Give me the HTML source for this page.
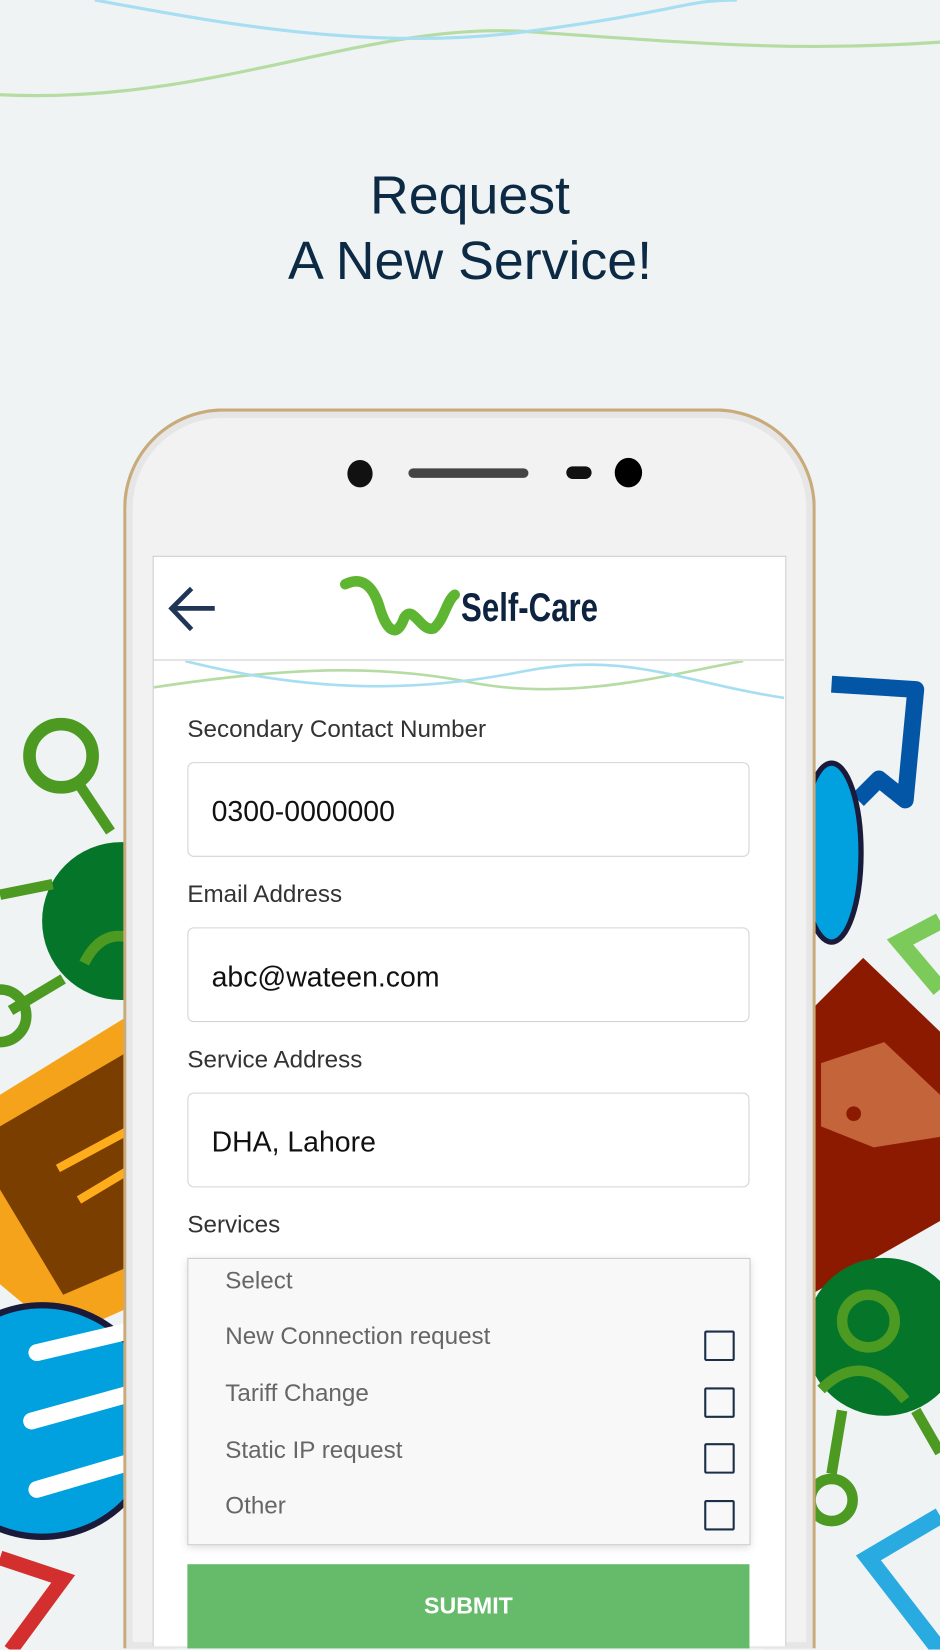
<!DOCTYPE html>
<html><head><meta charset="utf-8"><style>
html,body{margin:0;padding:0;width:940px;height:1650px;overflow:hidden;background:#eff3f4;}
#clip{position:absolute;left:0;top:0;width:940px;height:1650px;overflow:hidden;}
#w{position:absolute;left:0;top:0;width:893px;height:1567px;overflow:hidden;transform:scale(1.05263);transform-origin:0 0;font-family:"Liberation Sans",sans-serif;}
.a{position:absolute;}
.lbl{position:absolute;left:178px;font-size:23px;color:#333;}
.fld{position:absolute;left:178px;width:532px;height:88px;border:1.5px solid #d4d4d4;border-radius:6px;background:#fff;}
.fld span{position:absolute;left:22px;top:31px;font-size:27px;color:#111;}
.it{position:absolute;left:35px;font-size:23px;color:#666;}
.cb{position:absolute;left:490px;width:25px;height:25px;border:2.5px solid #1b2f48;border-radius:2px;}
</style></head><body><div id="clip"><div id="w">
<svg class="a" style="left:0;top:0" width="893" height="1568">
<path d="M0 90 C200 100 350 20 500 30 S750 50 893 40" stroke="#b5dca3" stroke-width="3" fill="none"/>
<path d="M90 0 C200 20 350 50 500 30 S650 0 700 0" stroke="#a8def2" stroke-width="3" fill="none"/>
<circle cx="115" cy="875" r="75" fill="#05752a"/>
<circle cx="58" cy="718" r="30" stroke="#4c9a22" stroke-width="12" fill="none"/>
<path d="M75 745 L105 790" stroke="#4c9a22" stroke-width="10"/>
<path d="M0 850 L50 840 M10 960 L60 930" stroke="#4c9a22" stroke-width="10"/>
<path d="M80 915 Q95 885 120 890" stroke="#4c9a22" stroke-width="10" fill="none"/>
<circle cx="0" cy="965" r="25" stroke="#4c9a22" stroke-width="10" fill="none"/>
<path d="M0 1040 L130 960 L150 1230 L60 1270 L0 1220Z" fill="#f5a31a"/>
<path d="M0 1070 L120 1000 L130 1200 L60 1230 L0 1130Z" fill="#7a3e00"/>
<path d="M55 1110 L120 1075 M75 1140 L125 1110" stroke="#ffad1a" stroke-width="8"/>
<circle cx="40" cy="1350" r="110" fill="#00a1de" stroke="#1a1a3a" stroke-width="6"/>
<path d="M35 1285 L120 1265 M30 1350 L120 1325 M35 1415 L120 1390" stroke="#fff" stroke-width="16" stroke-linecap="round"/>
<path d="M0 1480 L60 1500 L10 1568" stroke="#d32f2f" stroke-width="14" fill="none"/>
<path d="M790 650 L870 655 L860 760 L835 740 L815 760" stroke="#0356a6" stroke-width="16" fill="none" stroke-linejoin="round"/>
<ellipse cx="790" cy="810" rx="28" ry="85" fill="#00a1de" stroke="#1a1a3a" stroke-width="5"/>
<path d="M893 875 L855 895 L893 940" stroke="#7ccb5a" stroke-width="16" fill="none"/>
<path d="M770 960 L820 910 L893 980 L893 1160 L770 1230Z" fill="#8c1a00"/>
<path d="M780 1010 L840 990 L893 1040 L893 1080 L830 1090 L780 1070Z" fill="#c4643a"/>
<circle cx="811" cy="1058" r="7" fill="#8c1a00"/>
<circle cx="840" cy="1270" r="75" fill="#05752a"/>
<circle cx="825" cy="1255" r="25" stroke="#4c9a22" stroke-width="10" fill="none"/>
<path d="M780 1320 Q820 1280 860 1330" stroke="#4c9a22" stroke-width="10" fill="none"/>
<path d="M800 1340 L790 1400 M870 1340 L893 1380" stroke="#4c9a22" stroke-width="10"/>
<circle cx="790" cy="1425" r="20" stroke="#4c9a22" stroke-width="10" fill="none"/>
<path d="M893 1440 L825 1480 L893 1568" stroke="#29abe2" stroke-width="16" fill="none"/>
</svg>
<div class="a" style="left:0;top:155px;width:893px;text-align:center;font-size:51px;line-height:62px;color:#0d2a45;">Request<br>A New Service!</div>
<div class="a" style="left:117px;top:388px;width:652px;height:1175px;border:3px solid #c9aa7a;border-bottom:none;border-radius:95px 95px 0 0;background:#f2f2f2;box-shadow:inset 0 0 0 6px #e6e6e6;"></div>
<div class="a" style="left:330px;top:437px;width:24px;height:26px;border-radius:50%;background:#111;"></div>
<div class="a" style="left:388px;top:445px;width:114px;height:9px;border-radius:5px;background:#444;"></div>
<div class="a" style="left:538px;top:443px;width:24px;height:12px;border-radius:6px;background:#111;"></div>
<div class="a" style="left:584px;top:435px;width:26px;height:28px;border-radius:50%;background:#000;"></div>
<div class="a" style="left:145px;top:528px;width:600px;height:1035px;background:#fff;border:1px solid #ccc;border-bottom:none;"></div>
<div class="a" style="left:146px;top:626px;width:599px;height:2px;background:#e4e4e4;"></div>
<svg class="a" style="left:146px;top:628px" width="599" height="40">
<path d="M0 25 C100 10 200 0 300 20 S500 10 560 0" stroke="#b5dca3" stroke-width="2.5" fill="none"/>
<path d="M30 0 C150 30 250 30 350 10 S500 20 599 35" stroke="#a8def2" stroke-width="2.5" fill="none"/>
</svg>
<svg class="a" style="left:158px;top:555px" width="50" height="48"><path d="M46 23 H6 M24 4 L5 23 L24 43" stroke="#1f3656" stroke-width="4.5" fill="none"/></svg>
<svg class="a" style="left:322px;top:545px" width="115" height="65"><path d="M6 10 C22 2 32 12 38 30 C45 55 55 62 62 42 C70 28 78 56 90 52 C100 44 102 26 110 20" stroke="#5db531" stroke-width="10" fill="none" stroke-linecap="round"/></svg>
<div class="a" style="left:438px;top:557px;font-size:38px;font-weight:bold;color:#0d2340;transform:scaleX(0.78);transform-origin:0 0;">Self-Care</div>
<div class="lbl" style="top:679px">Secondary Contact Number</div>
<div class="fld" style="top:724px"><span>0300-0000000</span></div>
<div class="lbl" style="top:836px">Email Address</div>
<div class="fld" style="top:881px"><span>abc@wateen.com</span></div>
<div class="lbl" style="top:993px">Service Address</div>
<div class="fld" style="top:1038px"><span>DHA, Lahore</span></div>
<div class="lbl" style="top:1150px">Services</div>
<div class="a" style="left:178px;top:1195px;width:533px;height:271px;background:#f8f8f8;border:1.5px solid #ccc;box-shadow:0 2px 8px rgba(0,0,0,.15);">
<div class="it" style="top:7px">Select</div>
<div class="it" style="top:60px">New Connection request</div>
<div class="it" style="top:114px">Tariff Change</div>
<div class="it" style="top:168px">Static IP request</div>
<div class="it" style="top:221px">Other</div>
<div class="cb" style="top:68px"></div>
<div class="cb" style="top:122px"></div>
<div class="cb" style="top:175px"></div>
<div class="cb" style="top:229px"></div>
</div>
<div class="a" style="left:178px;top:1486px;width:534px;height:80px;background:#66bb6a;color:#fff;font-weight:bold;font-size:22px;text-align:center;line-height:80px;">SUBMIT</div>
</div></div></body></html>
